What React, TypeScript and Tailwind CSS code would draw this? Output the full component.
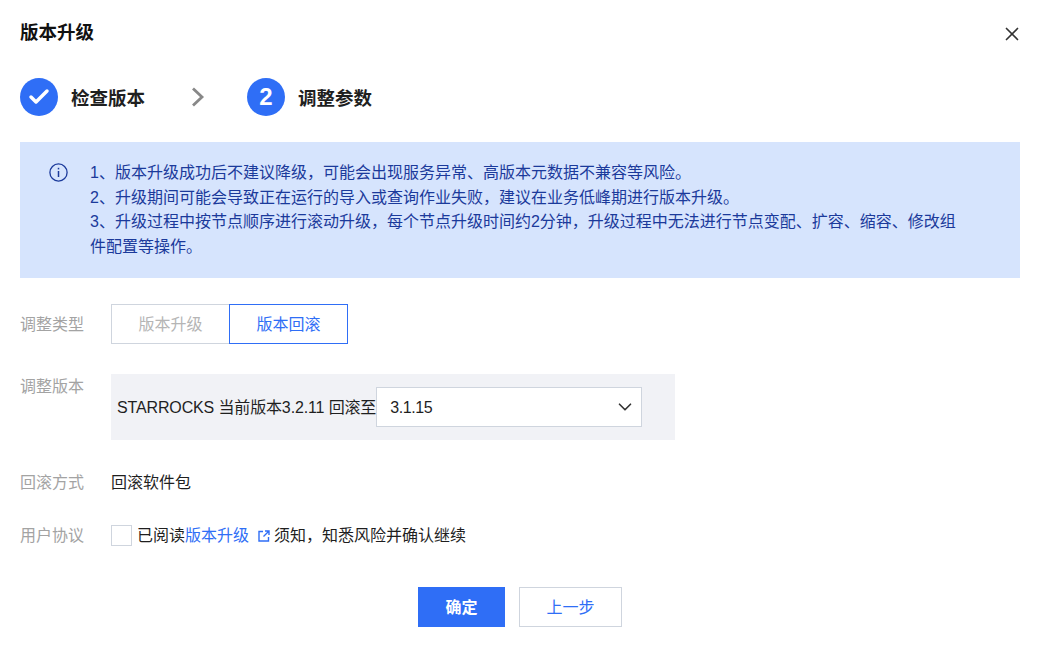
import { Check, ChevronDown, X } from 'lucide-react';

const notices = [
    '1、版本升级成功后不建议降级，可能会出现服务异常、高版本元数据不兼容等风险。',
    '2、升级期间可能会导致正在运行的导入或查询作业失败，建议在业务低峰期进行版本升级。',
    '3、升级过程中按节点顺序进行滚动升级，每个节点升级时间约2分钟，升级过程中无法进行节点变配、扩容、缩容、修改组件配置等操作。',
];

function Row({ label, className, children }: { label: string; className: string; children: React.ReactNode }) {
    return (
        <div className={`flex ${className}`}>
            <div className="w-[91px] shrink-0 text-[#a3a3a3]">{label}</div>
            {children}
        </div>
    );
}

export default function App() {
    return (
        <div className="h-[652px] w-[1044px] overflow-hidden bg-white px-5 text-[16px] leading-[25px] text-[#1f1f1f] [font-family:'Liberation_Sans','Noto_Sans_CJK_SC',sans-serif]">
            <div className="flex h-[64px] items-center justify-between">
                <h1 className="text-[18.5px] font-bold text-[#111]">版本升级</h1>
                <X className="mr-[1px] mt-[4px] h-[22px] w-[22px] text-[#333]" strokeWidth={1.8} />
            </div>

            <div className="mt-[14px] flex h-[38px] items-center">
                <div className="flex h-[38px] w-[38px] items-center justify-center rounded-full bg-[#2f6ef6]">
                    <Check className="h-[24px] w-[24px] text-white" strokeWidth={3.5} />
                </div>
                <span className="ml-[13px] pt-[2px] text-[18.5px] font-bold">检查版本</span>
                <svg className="ml-[46px] h-[20px] w-[14px]" viewBox="0 0 14 20" fill="none" stroke="#888" strokeWidth="2.8">
                    <path d="M2 1.5 11 10 2 18.5" />
                </svg>
                <div className="ml-[42px] flex h-[38px] w-[38px] items-center justify-center rounded-full bg-[#2f6ef6] pb-[2px] text-[24px] font-bold text-white">
                    2
                </div>
                <span className="ml-[13px] pt-[2px] text-[18.5px] font-bold">调整参数</span>
            </div>

            <div className="mt-[26px] flex h-[136px] w-[1000px] bg-[#d6e4fd] pl-[29px] pt-[19px] text-[#1b3a9b]">
                <svg className="mt-[2px] h-[19px] w-[19px] shrink-0" viewBox="0 0 19 19" fill="none" stroke="#1b3a9b" strokeWidth="1.3">
                    <circle cx="9.5" cy="9.5" r="8.6" />
                    <path d="M9.5 8v6" strokeWidth="1.5" />
                    <path d="M9.5 4.8v1.6" strokeWidth="1.5" />
                </svg>
                <div className="ml-[22px] w-[880px] leading-[24.7px]">
                    {notices.map((notice) => (
                        <p key={notice}>{notice}</p>
                    ))}
                </div>
            </div>

            <Row label="调整类型" className="mt-[26px] items-center">
                <div className="flex h-[40px] text-center leading-[39px]">
                    <button className="w-[119px] border border-[#cfd5de] text-[#b5b5b5]">版本升级</button>
                    <button className="-ml-px w-[119px] border border-[#2f6ef6] text-[#2f6ef6]">版本回滚</button>
                </div>
            </Row>

            <Row label="调整版本" className="mt-[30px]">
                <div className="flex h-[66px] w-[564px] items-center bg-[#f1f2f6] pl-[6px]">
                    <span className="whitespace-nowrap tracking-[-0.14px]">STARROCKS 当前版本3.2.11 回滚至</span>
                    <div className="flex h-[40px] w-[266px] items-center justify-between border border-[#cfd5de] bg-white pl-[13px] pr-[5px]">
                        <span className="tracking-[-0.4px]">3.1.15</span>
                        <ChevronDown className="h-[22px] w-[22px] text-[#333]" strokeWidth={1.8} />
                    </div>
                </div>
            </Row>

            <Row label="回滚方式" className="mt-[30px]">
                <span>回滚软件包</span>
            </Row>

            <Row label="用户协议" className="mt-[28px] items-center">
                <div className="h-[21px] w-[21px] border border-[#cfd5de] bg-white" />
                <span className="ml-[5px]">已阅读</span>
                <a className="text-[#2f6ef6]">版本升级</a>
                <svg className="ml-[9px] mr-[1px] h-[12px] w-[12px]" viewBox="0 0 12 12" fill="none" stroke="#2f6ef6" strokeWidth="1.4">
                    <path d="M5 1.5H1v9.5h9.5V7" />
                    <path d="M7 1h4v4M11 1 5.5 6.5" />
                </svg>
                <span className="ml-[3px]">须知，知悉风险并确认继续</span>
            </Row>

            <div className="mt-[39px] flex justify-center gap-[14px] pr-[4px]">
                <button className="h-[40px] w-[87px] bg-[#2f6ef6] font-bold text-white">确定</button>
                <button className="h-[40px] w-[103px] border border-[#cfd5de] text-[#2f6ef6]">上一步</button>
            </div>
        </div>
    );
}
